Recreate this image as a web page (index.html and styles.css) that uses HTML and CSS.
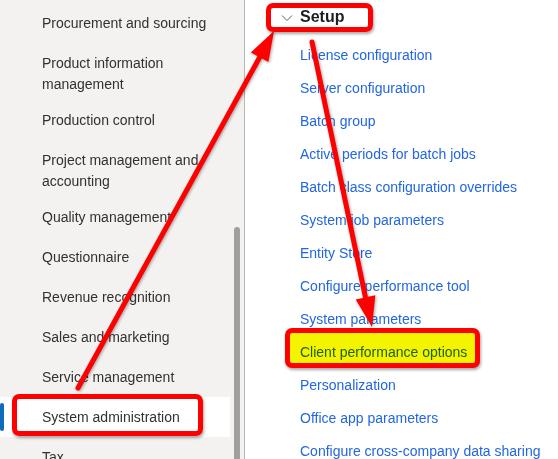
FILE: index.html
```html
<!DOCTYPE html>
<html>
<head>
<meta charset="utf-8">
<link rel="stylesheet" href="styles.css">
</head>
<body>

<div class="page">

  <nav class="sidebar">
    <ul class="modules">
      <li>Procurement and sourcing</li>
      <li>Product information management</li>
      <li>Production control</li>
      <li>Project management and accounting</li>
      <li>Quality management</li>
      <li>Questionnaire</li>
      <li>Revenue recognition</li>
      <li>Sales and marketing</li>
      <li>Service management</li>
      <li class="active">System administration</li>
      <li>Tax</li>
    </ul>
    <div class="scroll-track">
      <div class="scroll-thumb"></div>
    </div>
  </nav>

  <main class="content">
    <div class="group-head">
      <svg class="chevron" width="12" height="12" viewBox="0 0 12 12">
        <polyline points="1,3.5 6,8.5 11,3.5" fill="none" stroke="#605e5c" stroke-width="1"/>
      </svg>
      <span>Setup</span>
    </div>
    <ul class="links">
      <li><a href="#">License configuration</a></li>
      <li><a href="#">Server configuration</a></li>
      <li><a href="#">Batch group</a></li>
      <li><a href="#">Active periods for batch jobs</a></li>
      <li><a href="#">Batch class configuration overrides</a></li>
      <li><a href="#">System job parameters</a></li>
      <li><a href="#">Entity Store</a></li>
      <li><a href="#">Configure performance tool</a></li>
      <li><a href="#">System parameters</a></li>
      <li><a href="#">Client performance options</a></li>
      <li><a href="#">Personalization</a></li>
      <li><a href="#">Office app parameters</a></li>
      <li><a href="#">Configure cross-company data sharing</a></li>
    </ul>
  </main>

  <!-- annotation layer drawn over the screenshot -->
  <svg class="arrows" width="558" height="459" viewBox="0 0 558 459">
    <line x1="78" y1="388" x2="262" y2="53" stroke="#ff0000" stroke-width="5" stroke-linecap="round"/>
    <polygon points="274,31 268.4,62.1 250.8,52.5" fill="#ff0000"/>
    <line x1="312" y1="42" x2="366" y2="300" stroke="#ff0000" stroke-width="5" stroke-linecap="round"/>
    <polygon points="372,327 375.3,295.2 355.7,299.4" fill="#ff0000"/>
  </svg>
  <div class="mark mark-setup"></div>
  <div class="mark mark-sysadmin"></div>
  <div class="mark mark-client"></div>

</div>

</body>
</html>
```

FILE: styles.css
```css
body {
    margin: 0;
    background: #fff;
    font-family: "Liberation Sans", Arial, sans-serif;
    font-size: 14px;
    overflow: hidden;
}

ul {
    list-style-type: none;
    margin: 0;
    padding: 0;
}

.page {
    position: relative;
    display: flex;
    width: 558px;
    height: 459px;
    overflow: hidden;
}

/* left module list */
.sidebar {
    display: flex;
    width: 244px;
    height: 459px;
    flex-shrink: 0;
    background-color: #f3f2f1;
    border-right: 1px solid #b9b7b5;
}

.modules {
    width: 230px;
    padding-top: 3px;
}

.modules li {
    position: relative;
    box-sizing: border-box;
    min-height: 40px;
    padding: 9.5px 16px 5.5px 42px;
    line-height: 21px;
    color: #323130;
}

.modules li.active {
    background-color: #fff;
}

.modules li.active::before {
    content: "";
    position: absolute;
    left: 0;
    top: 6px;
    width: 4px;
    height: 28px;
    border-radius: 2px;
    background-color: #0f6cbd;
}

.scroll-track {
    width: 14px;
}

.scroll-thumb {
    width: 6px;
    height: 240px;
    margin: 227px 0 0 4px;
    border-radius: 3px 3px 0 0;
    background-color: #a19f9d;
}

/* right link group */
.content {
    flex: 1;
}

.group-head {
    display: flex;
    align-items: center;
    gap: 7px;
    height: 34px;
    padding-left: 36px;
    font-size: 16px;
    font-weight: 600;
    color: #201f1e;
}

.chevron {
    margin-top: 1px;
}

.links {
    padding-top: 5px;
    padding-left: 55px;
}

.links li {
    height: 33px;
    line-height: 33px;
}

.links a {
    color: #2266e3;
    text-decoration: none;
    white-space: nowrap;
}

/* annotations */
.arrows {
    position: absolute;
    left: 0;
    top: 0;
    filter: drop-shadow(1px 1px 1.5px rgba(0, 0, 0, 0.35));
}

.mark {
    position: absolute;
    box-sizing: border-box;
    border: 5px solid #ff0000;
    border-radius: 7px;
    box-shadow: 1px 2px 3px rgba(0, 0, 0, 0.35);
}

.mark-setup {
    left: 266px;
    top: 3px;
    width: 107px;
    height: 29px;
}

.mark-sysadmin {
    left: 12px;
    top: 394px;
    width: 191px;
    height: 42px;
}

.mark-client {
    left: 285px;
    top: 328px;
    width: 195px;
    height: 40px;
    background-color: #f4f400;
    mix-blend-mode: multiply;
}
```
